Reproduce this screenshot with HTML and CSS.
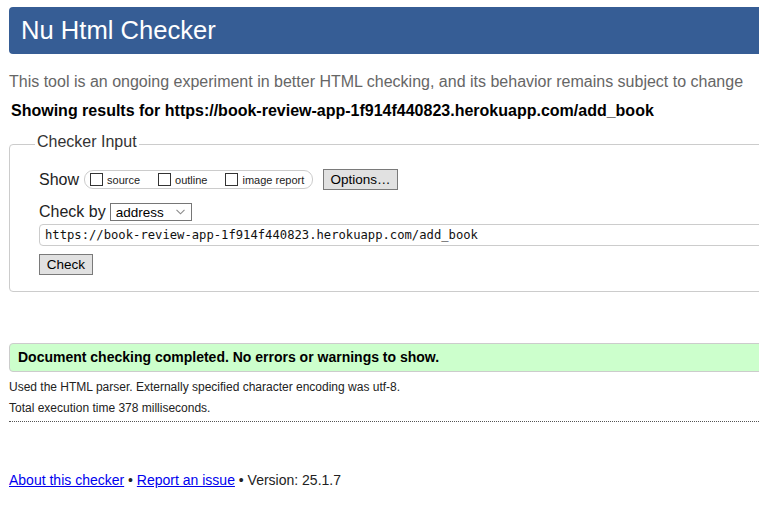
FILE: index.html
```html
<!DOCTYPE html>
<html lang="en">
<head>
<meta charset="utf-8">
<title>Showing results for https://book-review-app-1f914f440823.herokuapp.com/add_book - Nu Html Checker</title>
<link rel="stylesheet" href="styles.css">
</head>
<body>
<div class="page">
  <h1 class="title">Nu Html Checker</h1>
  <p class="intro">This tool is an ongoing experiment in better HTML checking, and its behavior remains subject to change</p>
  <p class="showing">Showing results for https://book-review-app-1f914f440823.herokuapp.com/add_book</p>

  <fieldset class="checker">
    <legend class="legend">Checker Input</legend>
    <div class="row show-row">
      <span class="label">Show</span>
      <span class="opts">
        <label class="opt"><input type="checkbox" class="cb"><span>source</span></label>
        <label class="opt"><input type="checkbox" class="cb"><span>outline</span></label>
        <label class="opt"><input type="checkbox" class="cb"><span>image report</span></label>
      </span>
      <button class="btn options-btn" type="button">Options…</button>
    </div>
    <div class="row checkby-row">
      <span class="label">Check by</span>
      <span class="select"><span>address</span><svg class="chev" width="9" height="6" viewBox="0 0 9 6"><path d="M0.5 0.8 L4.5 4.8 L8.5 0.8" fill="none" stroke="#8a8a8a" stroke-width="1.1"/></svg></span>
    </div>
    <div class="url">https://book-review-app-1f914f440823.herokuapp.com/add_book</div>
    <div class="row">
      <button class="btn check-btn" type="button">Check</button>
    </div>
  </fieldset>

  <p class="success">Document checking completed. No errors or warnings to show.</p>
  <p class="details">Used the HTML parser. Externally specified character encoding was utf-8.</p>
  <p class="details time">Total execution time 378 milliseconds.</p>
  <hr class="dotted">

  <p class="footer"><a href="#">About this checker</a> • <a href="#">Report an issue</a> • Version: 25.1.7</p>
</div>
</body>
</html>
```

FILE: styles.css
```css
html, body {
  margin: 0;
  padding: 0;
  overflow: hidden;
  background: #fff;
}
body {
  font-family: "Liberation Sans", Arial, sans-serif;
  color: #000;
}
.page {
  width: 1000px;
  padding: 7px 0 0 9px;
}
.title {
  margin: 0;
  height: 47px;
  line-height: 47px;
  padding: 0 12px;
  background: #365d95;
  color: #fff;
  font-weight: normal;
  font-size: 25.6px;
  border-radius: 4px;
}
.intro {
  margin: 19px 0 0;
  font-size: 16px;
  line-height: 18px;
  color: #666;
}
.showing {
  margin: 11px 0 0 2px;
  font-size: 16px;
  line-height: 18px;
  font-weight: bold;
}
.checker {
  margin: 13px 0 0;
  padding: 14px 0 16px 29px;
  border: 1px solid #ccc;
  border-radius: 4px;
  display: flex;
  flex-direction: column;
}
.legend {
  margin-left: -4px;
  padding: 0 2px 4px;
  font-size: 16px;
  line-height: 18px;
  color: #333;
}
.row {
  display: flex;
  align-items: center;
}
.label {
  font-size: 16px;
  line-height: 18px;
  color: #222;
}
.show-row {
  height: 21px;
}
.opts {
  display: flex;
  align-items: center;
  margin-left: 5px;
  height: 17px;
  width: 222px;
  padding: 0 0 0 5px;
  border: 1px solid #ccc;
  border-radius: 9px;
  gap: 18px;
}
.opt {
  display: flex;
  align-items: center;
  gap: 4px;
  font-size: 11px;
  color: #222;
}
.cb {
  appearance: none;
  -webkit-appearance: none;
  margin: 0;
  width: 13px;
  height: 13px;
  border: 1px solid #333;
  background: #fff;
  border-radius: 0;
}
.btn {
  font-family: "Liberation Sans", Arial, sans-serif;
  font-size: 13.5px;
  color: #000;
  background: #e1e1e1;
  border: 1px solid #7a7a7a;
  border-radius: 0;
  padding: 0;
  height: 21px;
}
.options-btn {
  margin-left: 10px;
  width: 75px;
}
.checkby-row {
  margin-top: 13px;
  height: 18px;
}
.select {
  display: flex;
  align-items: center;
  justify-content: space-between;
  box-sizing: border-box;
  margin-left: 4px;
  width: 82px;
  height: 18px;
  padding: 0 6px 0 5px;
  border: 1px solid #767676;
  font-size: 13.5px;
  color: #000;
}
.chev {
  display: block;
}
.url {
  margin-top: 3px;
  box-sizing: border-box;
  height: 22px;
  line-height: 20px;
  padding-left: 5px;
  border: 1px solid #ccc;
  border-radius: 4px;
  font-family: "DejaVu Sans Mono", "Liberation Mono", monospace;
  font-size: 12.2px;
  color: #111;
}
.url + .row {
  margin-top: 8px;
}
.check-btn {
  width: 54px;
}
.success {
  margin: 51px 0 0;
  box-sizing: border-box;
  height: 29px;
  line-height: 27px;
  padding-left: 8px;
  background: #ccffcc;
  border: 1px solid #ccc;
  border-radius: 4px;
  font-size: 14px;
  font-weight: bold;
}
.details {
  margin: 8px 0 0;
  font-size: 12px;
  line-height: 14px;
  color: #222;
}
.details.time {
  margin-top: 7px;
}
.dotted {
  margin: 6px 0 0;
  height: 0;
  border: 0;
  border-top: 1px dotted #555;
}
.footer {
  margin: 50px 0 0;
  font-size: 14px;
  line-height: 16px;
  color: #222;
}
.footer a {
  color: #00e;
  text-decoration: underline;
}
```
